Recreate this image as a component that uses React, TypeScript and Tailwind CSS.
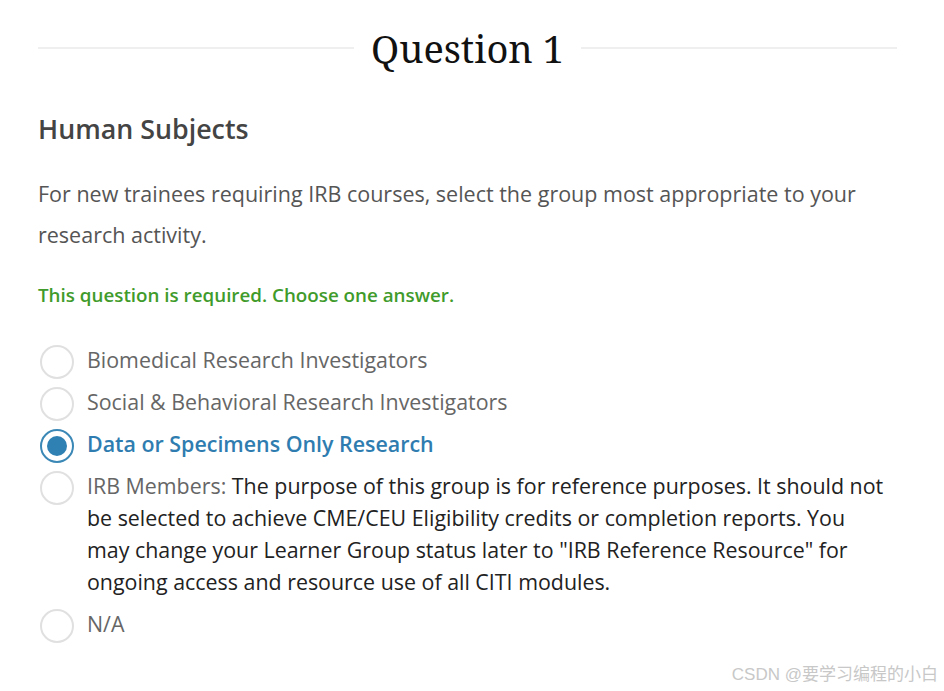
import React, { useState } from 'react';

type Option = {
  id: string;
  label: string;
  detail?: string;
};

const options: Option[] = [
  { id: 'bio', label: 'Biomedical Research Investigators' },
  { id: 'sbr', label: 'Social & Behavioral Research Investigators' },
  { id: 'data', label: 'Data or Specimens Only Research' },
  {
    id: 'irb',
    label: 'IRB Members:',
    detail:
      ' The purpose of this group is for reference purposes. It should not be selected to achieve CME/CEU Eligibility credits or completion reports. You may change your Learner Group status later to "IRB Reference Resource" for ongoing access and resource use of all CITI modules.',
  },
  { id: 'na', label: 'N/A' },
];

// circle sits a little below the text's middle, like the original
const Radio: React.FC<{ checked: boolean }> = ({ checked }) => (
  <span
    className={`mt-[1px] mb-[-3px] flex h-[34px] w-[34px] shrink-0 items-center justify-center rounded-full border-2 bg-white ${
      checked ? 'border-[#3b88b6]' : 'border-[#e0e0e0]'
    }`}
  >
    {checked && <span className="h-[20px] w-[20px] rounded-full bg-[#2f80b3]" />}
  </span>
);

const App: React.FC = () => {
  const [selected, setSelected] = useState('data');

  return (
    <div className="relative min-h-[691px] bg-white font-['Open_Sans',sans-serif]">
      <div className="w-[859px] pl-[38px] pt-[24px] box-content">
        <div className="flex items-center">
          <div className="h-[2px] flex-1 bg-[#efefef]" />
          <h1 className="px-[17px] font-['Noto_Serif','DejaVu_Serif',serif] text-[38px] leading-[48px] text-[#111]">
            Question 1
          </h1>
          <div className="h-[2px] flex-1 bg-[#efefef]" />
        </div>

        <h2 className="mt-[41px] text-[26.8px] font-semibold leading-[32px] text-[#444]">Human Subjects</h2>

        <p className="mt-[28px] text-[21.5px] leading-[41px] text-[#555]">
          For new trainees requiring IRB courses, select the group most appropriate to your research activity.
        </p>

        <p className="mt-[28px] text-[18.8px] font-semibold leading-[24px] text-[#3f9b2b]">
          This question is required. Choose one answer.
        </p>

        <div className="mt-[37px] flex flex-col gap-[10px]">
          {options.map((o) => {
            const checked = selected === o.id;
            return (
              <label key={o.id} className="flex cursor-pointer items-start gap-[13px] pl-[2px]" onClick={() => setSelected(o.id)}>
                <Radio checked={checked} />
                <span
                  className={`max-w-[802px] text-[21.4px] leading-[32px] ${
                    checked ? 'font-semibold text-[#2f7db0]' : 'text-[#666]'
                  }`}
                >
                  {o.label}
                  {o.detail && <span className="text-[#222]">{o.detail}</span>}
                </span>
              </label>
            );
          })}
        </div>
      </div>

      <div className="absolute bottom-[4px] right-[6px] font-['Liberation_Sans','Noto_Sans_CJK_SC',sans-serif] text-[17px] text-[#c8c8c8]">
        CSDN @要学习编程的小白
      </div>
    </div>
  );
};

export default App;
